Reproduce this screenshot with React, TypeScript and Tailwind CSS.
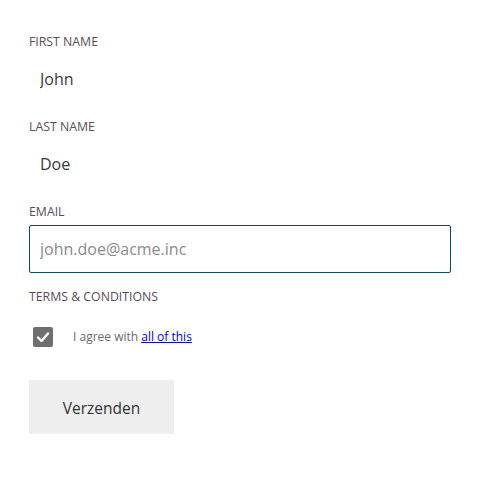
export default function App() {
  const font = { fontFamily: '"Open Sans", "Noto Sans", sans-serif' };

  return (
    <div className="min-h-[487px] w-[489px] bg-white pt-[34px] pl-[29px]" style={font}>
      <div className="w-[422px]">
        <label className="block h-4 text-[12.3px] leading-4 text-[#5b4b59] uppercase mb-[5px]">
          First name
        </label>
        <input
          readOnly
          defaultValue="John"
          className="block w-full h-[48px] px-[10px] text-[16px] text-[#3a3a3a] border border-transparent outline-none mb-4"
        />

        <label className="block h-4 text-[12.3px] leading-4 text-[#5b4b59] uppercase mb-[5px]">
          Last name
        </label>
        <input
          readOnly
          defaultValue="Doe"
          className="block w-full h-[48px] px-[10px] text-[16px] text-[#3a3a3a] border border-transparent outline-none mb-4"
        />

        <label className="block h-4 text-[12.3px] leading-4 text-[#5b4b59] uppercase mb-[5px]">
          Email
        </label>
        <input
          placeholder="john.doe@acme.inc"
          className="block w-full h-[48px] px-[10px] text-[16px] text-[#3a3a3a] placeholder:text-[#8a8a8a] border border-[#0d4b5c] rounded-[2px] outline-none mb-4"
        />

        <label className="block h-4 text-[12.3px] leading-4 text-[#5b4b59] uppercase">
          Terms &amp; conditions
        </label>

        <div className="flex items-center mt-[22px] pl-[4px]">
          <span className="flex items-center justify-center w-5 h-5 rounded-[2px] bg-[#6f6f6f]">
            <svg width="14" height="14" viewBox="0 0 14 14" fill="none">
              <path d="M2 7.5 L5.5 11 L12 3.5" stroke="white" strokeWidth="2.4" strokeLinecap="round" strokeLinejoin="round" />
            </svg>
          </span>
          <span className="ml-[20px] text-[12px] text-[#6a6a6a]">
            I agree with{" "}
            <a href="#" className="text-[#0000ee] underline">
              all of this
            </a>
          </span>
        </div>

        <button className="mt-[33px] w-[145px] h-[54px] pt-[3px] bg-[#eeeeee] text-[15.5px] text-[#333]">
          Verzenden
        </button>
      </div>
    </div>
  );
}
